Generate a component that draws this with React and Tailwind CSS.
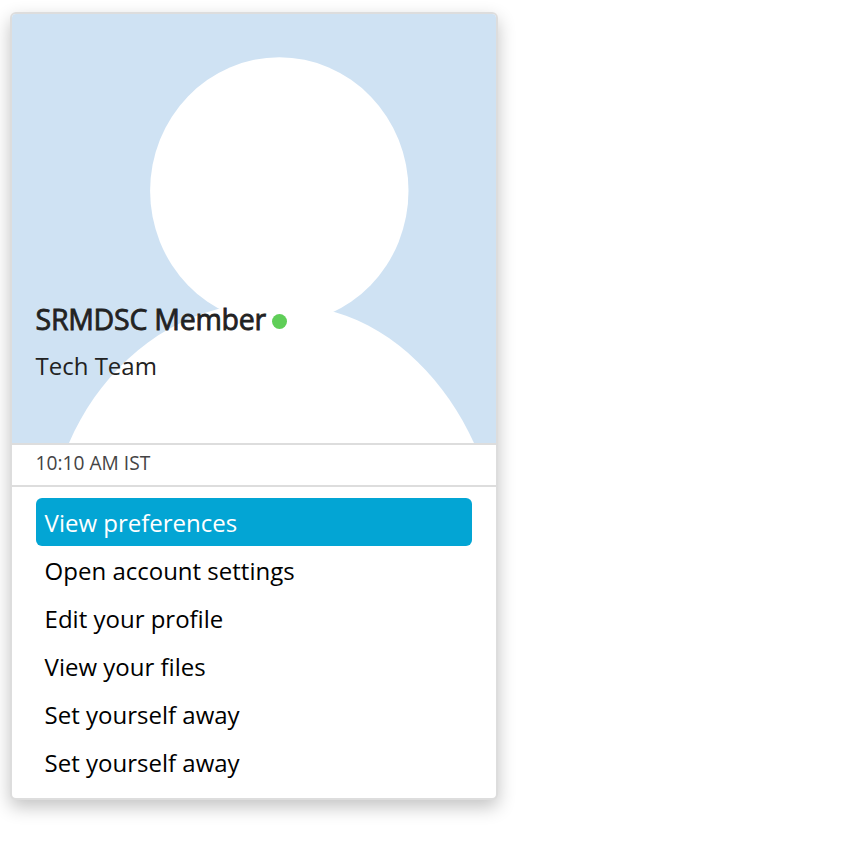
const items = [
  "View preferences",
  "Open account settings",
  "Edit your profile",
  "View your files",
  "Set yourself away",
  "Set yourself away",
];

export default function App() {
  return (
    <div className="h-[848px] w-[849px] overflow-hidden bg-white pl-[10px] pt-3 font-['Open_Sans',sans-serif] text-black">
      <div className="h-[788px] w-[488px] overflow-hidden rounded-md border-2 border-[#dddddd] bg-white shadow-[0_7px_18px_rgba(0,0,0,0.24)]">
        <div className="grid h-[429px] bg-[#cfe2f3]">
          <svg className="col-start-1 row-start-1 h-[429px] w-[484px]" viewBox="12 14 484 429" fill="white">
            <ellipse cx="279.3" cy="190.8" rx="129.2" ry="133.5" />
            <path d="M69 443C96 380 149 327 218 309L334.5 312C397 330 446 382 474 443Z" />
          </svg>
          <div className="col-start-1 row-start-1 flex flex-col pl-[23.5px] pt-[285px]">
            <div className="flex h-10 w-[251.5px] items-center justify-between">
              <h1 className="-mt-px whitespace-nowrap text-[28.5px] font-normal leading-10 tracking-[-0.25px] text-[#222222] [-webkit-text-stroke:0.8px_#222222]">SRMDSC Member</h1>
              <span className="mt-[5px] size-[15px] rounded-full bg-[#5fce58]" />
            </div>
            <p className="mt-[7px] text-2xl leading-10 text-[#222222]">Tech Team</p>
          </div>
        </div>
        <div className="h-[44px] border-y-2 border-[#dddddd] pl-[23.5px] text-[19.2px] leading-[35px] text-[#444444]">10:10 AM IST</div>
        <ul className="px-6 pt-[11px]">
          {items.map((item, i) => (
            <li key={i} className={`h-12 rounded-md pl-[8.6px] text-2xl leading-[50px] ${i === 0 ? "bg-[#03a5d4] text-white" : ""}`}>{item}</li>
          ))}
        </ul>
      </div>
    </div>
  );
}
